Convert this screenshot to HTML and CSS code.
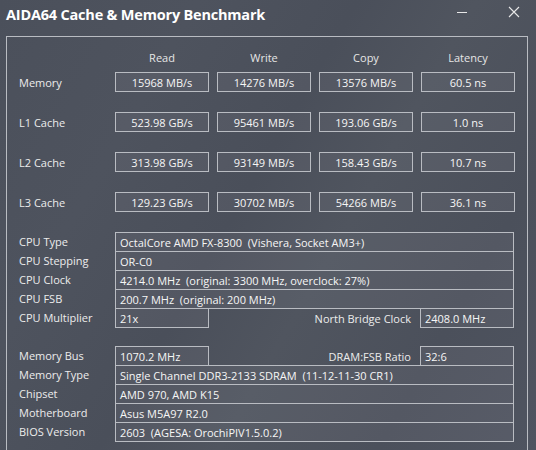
FILE: index.html
```html
<!DOCTYPE html>
<html>
<head>
<meta charset="utf-8">
<link rel="stylesheet" href="styles.css">
</head>
<body>
<div class="window">
  <div class="titlebar">
    <div class="title">AIDA64 Cache &amp; Memory Benchmark</div>
    <div class="controls">
      <svg class="ctl" width="12" height="12" viewBox="0 0 12 12"><path d="M1 6.5H11" stroke="#e8e8e8" stroke-width="1"/></svg>
      <svg class="ctl" width="12" height="12" viewBox="0 0 12 12"><path d="M1 1L11 11M11 1L1 11" stroke="#e8e8e8" stroke-width="1.1"/></svg>
    </div>
  </div>
  <div class="panel">
    <div class="bench-head">
      <span></span><span>Read</span><span>Write</span><span>Copy</span><span>Latency</span>
    </div>
    <div class="bench">
      <span class="lbl">Memory</span><span class="val">15968 MB/s</span><span class="val">14276 MB/s</span><span class="val">13576 MB/s</span><span class="val">60.5 ns</span>
      <span class="lbl">L1 Cache</span><span class="val">523.98 GB/s</span><span class="val">95461 MB/s</span><span class="val">193.06 GB/s</span><span class="val">1.0 ns</span>
      <span class="lbl">L2 Cache</span><span class="val">313.98 GB/s</span><span class="val">93149 MB/s</span><span class="val">158.43 GB/s</span><span class="val">10.7 ns</span>
      <span class="lbl">L3 Cache</span><span class="val">129.23 GB/s</span><span class="val">30702 MB/s</span><span class="val">54266 MB/s</span><span class="val">36.1 ns</span>
    </div>
    <div class="info">
      <span class="lbl">CPU Type</span><span class="cell wide">OctalCore AMD FX-8300  (Vishera, Socket AM3+)</span>
      <span class="lbl">CPU Stepping</span><span class="cell wide">OR-C0</span>
      <span class="lbl">CPU Clock</span><span class="cell wide">4214.0 MHz  (original: 3300 MHz, overclock: 27%)</span>
      <span class="lbl">CPU FSB</span><span class="cell wide">200.7 MHz  (original: 200 MHz)</span>
      <span class="lbl">CPU Multiplier</span><span class="cell">21x</span><span class="mid">North Bridge Clock</span><span class="cell">2408.0 MHz</span>
      <span class="spacer"></span>
      <span class="lbl">Memory Bus</span><span class="cell">1070.2 MHz</span><span class="mid">DRAM:FSB Ratio</span><span class="cell">32:6</span>
      <span class="lbl">Memory Type</span><span class="cell wide">Single Channel DDR3-2133 SDRAM  (11-12-11-30 CR1)</span>
      <span class="lbl">Chipset</span><span class="cell wide">AMD 970, AMD K15</span>
      <span class="lbl">Motherboard</span><span class="cell wide">Asus M5A97 R2.0</span>
      <span class="lbl">BIOS Version</span><span class="cell wide">2603  (AGESA: OrochiPIV1.5.0.2)</span>
    </div>
  </div>
</div>
</body>
</html>
```
FILE: styles.css
```css
html, body {
  margin: 0;
  padding: 0;
  height: 100%;
  overflow: hidden;
}
body {
  background: linear-gradient(120deg, #4b505b 0%, #4e535e 25%, #4a4f5a 45%, #50555f 60%, #4b505b 80%, #4f5460 100%);
  font-family: "Open Sans", "Noto Sans", sans-serif;
  color: #ececec;
  font-size: 11px;
}
.window {
  width: 536px;
  height: 450px;
}
.titlebar {
  height: 36px;
  display: flex;
  justify-content: space-between;
  align-items: flex-start;
}
.title {
  padding: 5px 0 0 6px;
  font-size: 14.5px;
  font-weight: 700;
  color: #ffffff;
  letter-spacing: -0.2px;
}
.controls {
  display: flex;
  gap: 40px;
  padding: 6px 16px 0 0;
}
.ctl {
  display: block;
}
.panel {
  margin-left: 6px;
  width: 522px;
  height: 420px;
  box-sizing: border-box;
  border: 1px solid #b9bcc2;
  border-bottom: none;
  padding: 10px 13px 0 12px;
}
.bench-head, .bench {
  display: grid;
  grid-template-columns: 88px repeat(4, 94px);
  column-gap: 8px;
}
.bench-head {
  height: 20px;
  margin-bottom: 5px;
  align-items: center;
  text-align: center;
  color: #e6e6e6;
}
.bench {
  grid-auto-rows: 20px;
  row-gap: 20px;
}
.lbl {
  display: flex;
  align-items: center;
  white-space: nowrap;
}
.val {
  box-sizing: border-box;
  border: 1px solid #b9bcc2;
  background: rgba(255, 255, 255, 0.05);
  display: flex;
  align-items: center;
  justify-content: center;
  color: #f6f6f6;
}
.info {
  margin-top: 20px;
  display: grid;
  grid-template-columns: 96px 94px 1fr 94px;
  grid-auto-rows: 19px;
}
.cell {
  box-sizing: border-box;
  height: 20px;
  border: 1px solid #b9bcc2;
  background: rgba(255, 255, 255, 0.05);
  padding-left: 4px;
  display: flex;
  align-items: center;
  white-space: pre;
  color: #f6f6f6;
}
.wide {
  grid-column: 2 / 5;
}
.mid {
  display: flex;
  align-items: center;
  justify-content: flex-end;
  padding-right: 9px;
  height: 20px;
}
.spacer {
  grid-column: 1 / 5;
}
```
